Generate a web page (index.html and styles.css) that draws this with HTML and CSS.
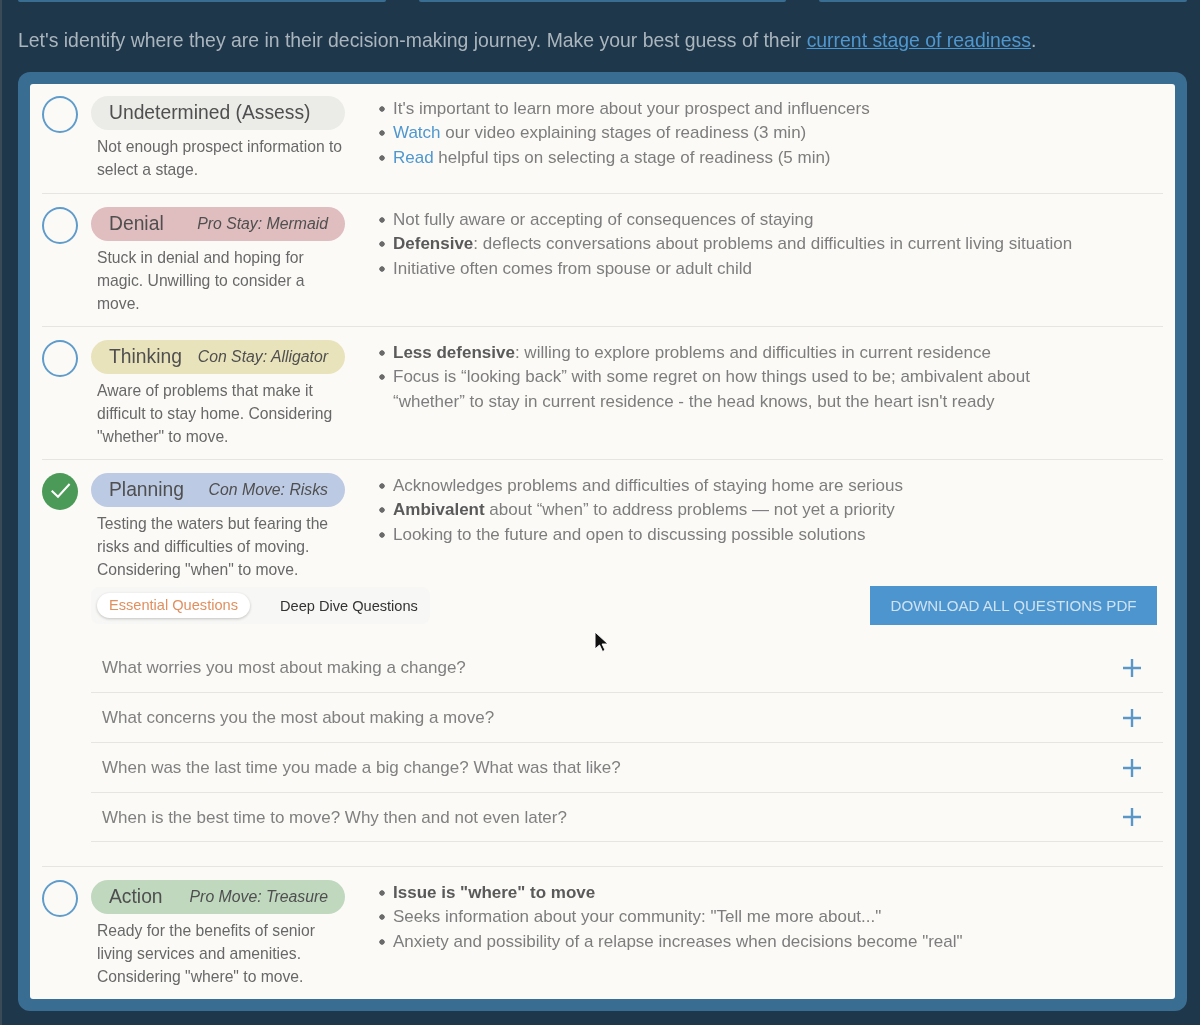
FILE: index.html
```html
<!DOCTYPE html>
<html lang="en">
<head>
<meta charset="utf-8">
<title>Stage of readiness</title>
<link rel="stylesheet" href="styles.css">
</head>
<body>
<div class="tabs-top"><span></span><span></span><span></span></div>
<p class="intro">Let's identify where they are in their decision-making journey. Make your best guess of their <a href="#">current stage of readiness</a>.</p>
<main class="panel">
  <div class="card">
    <section class="stage">
      <div class="stage-head">
        <span class="radio"></span>
        <div class="stage-info">
          <div class="pill pill-grey"><span class="pill-name">Undetermined (Assess)</span></div>
          <p class="desc">Not enough prospect information to select a stage.</p>
        </div>
      </div>
      <ul class="points">
        <li>It's important to learn more about your prospect and influencers</li>
        <li><a href="#">Watch</a> our video explaining stages of readiness (3 min)</li>
        <li><a href="#">Read</a> helpful tips on selecting a stage of readiness (5 min)</li>
      </ul>
    </section>
    <section class="stage">
      <div class="stage-head">
        <span class="radio"></span>
        <div class="stage-info">
          <div class="pill pill-red"><span class="pill-name">Denial</span><em>Pro Stay: Mermaid</em></div>
          <p class="desc">Stuck in denial and hoping for magic. Unwilling to consider a move.</p>
        </div>
      </div>
      <ul class="points">
        <li>Not fully aware or accepting of consequences of staying</li>
        <li><b>Defensive</b>: deflects conversations about problems and difficulties in current living situation</li>
        <li>Initiative often comes from spouse or adult child</li>
      </ul>
    </section>
    <section class="stage">
      <div class="stage-head">
        <span class="radio"></span>
        <div class="stage-info">
          <div class="pill pill-yellow"><span class="pill-name">Thinking</span><em>Con Stay: Alligator</em></div>
          <p class="desc">Aware of problems that make it difficult to stay home. Considering "whether" to move.</p>
        </div>
      </div>
      <ul class="points">
        <li><b>Less defensive</b>: willing to explore problems and difficulties in current residence</li>
        <li>Focus is “looking back” with some regret on how things used to be; ambivalent about “whether” to stay in current residence - the head knows, but the heart isn't ready</li>
      </ul>
    </section>
    <section class="stage stage-open">
      <div class="stage-top">
        <div class="stage-head">
          <span class="radio radio-on">
            <svg viewBox="0 0 36 37" width="36" height="37"><path d="M9.7 17.7l6.3 6L27.6 11" fill="none" stroke="#fff" stroke-width="2"/></svg>
          </span>
          <div class="stage-info">
            <div class="pill pill-blue"><span class="pill-name">Planning</span><em>Con Move: Risks</em></div>
            <p class="desc">Testing the waters but fearing the risks and difficulties of moving. Considering "when" to move.</p>
          </div>
        </div>
        <ul class="points">
          <li>Acknowledges problems and difficulties of staying home are serious</li>
          <li><b>Ambivalent</b> about “when” to address problems — not yet a priority</li>
          <li>Looking to the future and open to discussing possible solutions</li>
        </ul>
      </div>
      <div class="questions">
        <div class="toolbar">
          <div class="switch">
            <span class="switch-on">Essential Questions</span>
            <span class="switch-off">Deep Dive Questions</span>
          </div>
          <a class="download" href="#">DOWNLOAD ALL QUESTIONS PDF</a>
        </div>
        <div class="q"><span>What worries you most about making a change?</span><svg class="plus" viewBox="0 0 18 18" width="18" height="18"><path d="M9 0v18M0 9h18"/></svg></div>
        <div class="q"><span>What concerns you the most about making a move?</span><svg class="plus" viewBox="0 0 18 18" width="18" height="18"><path d="M9 0v18M0 9h18"/></svg></div>
        <div class="q"><span>When was the last time you made a big change? What was that like?</span><svg class="plus" viewBox="0 0 18 18" width="18" height="18"><path d="M9 0v18M0 9h18"/></svg></div>
        <div class="q"><span>When is the best time to move? Why then and not even later?</span><svg class="plus" viewBox="0 0 18 18" width="18" height="18"><path d="M9 0v18M0 9h18"/></svg></div>
      </div>
    </section>
    <section class="stage">
      <div class="stage-head">
        <span class="radio"></span>
        <div class="stage-info">
          <div class="pill pill-green"><span class="pill-name">Action</span><em>Pro Move: Treasure</em></div>
          <p class="desc">Ready for the benefits of senior living services and amenities. Considering "where" to move.</p>
        </div>
      </div>
      <ul class="points">
        <li><b>Issue is "where" to move</b></li>
        <li>Seeks information about your community: "Tell me more about..."</li>
        <li>Anxiety and possibility of a relapse increases when decisions become "real"</li>
      </ul>
    </section>
  </div>
</main>
<svg class="cursor" viewBox="0 0 16 24" width="16" height="24"><path d="M1 1v17l4.5-4 3 6.5 2.6-1.2-3-6.3H14z" fill="#111" stroke="#fff" stroke-width="1"/></svg>
</body>
</html>
```
FILE: styles.css
```css
* { box-sizing: border-box; }
html, body { margin: 0; height: 1025px; overflow: hidden; }
body {
  position: relative;
  background: #1f374a;
  font-family: "Liberation Sans", Arial, sans-serif;
  color: #666;
  padding: 0 13px 0 16px;
  border-left: 2px solid #3a4a57;
}
.tabs-top { display: flex; gap: 33px; height: 2px; }
.tabs-top span { flex: 1; background: #3a6d92; border-radius: 0 0 3px 3px; }
.intro {
  margin: 0;
  padding-top: 26px;
  font-size: 19.42px;
  line-height: 24px;
  color: #aab5bd;
  height: 70px;
  filter: blur(0.55px);
}
.intro a { color: #4f97cf; text-decoration: underline; }
.panel {
  background: #3a6d92;
  border-radius: 12px;
  padding: 12px;
  height: 939px;
  filter: blur(0.55px);
}
.card {
  background: #fbfaf7;
  border-radius: 3px;
  height: 915px;
  padding: 0 12px;
}
.stage {
  display: flex;
  padding: 12px 0 11px;
  border-bottom: 1px solid #e6e5e1;
}
.stage:first-child { padding-bottom: 12px; }
.stage + .stage { padding-top: 13px; }
.stage:last-child { border-bottom: 0; }
.stage-open { display: block; padding-bottom: 24px; }
.stage-top { display: flex; }
.stage-head { display: flex; gap: 13px; width: 303px; flex: none; }
.stage-info { width: 254px; }
.radio {
  flex: none;
  width: 36px;
  height: 37px;
  border: 2.3px solid #5f9ccb;
  border-radius: 50%;
}
.radio-on {
  border: 0;
  background: #4c9a58;
}
.radio-on svg { display: block; }
.pill {
  display: flex;
  justify-content: space-between;
  align-items: center;
  height: 34px;
  padding: 0 17px 0 18px;
  border-radius: 17px;
  color: #4f4f4f;
}
.pill-name { font-size: 19.3px; }
.pill em { font-size: 15.8px; }
.pill-grey { background: #ebebe8; }
.pill-red { background: #e0bdbf; }
.pill-yellow { background: #e9e3bb; }
.pill-blue { background: #bdcae3; }
.pill-green { background: #bfd8be; }
.desc {
  margin: 5px 0 0;
  padding-left: 6px;
  font-size: 15.7px;
  line-height: 23px;
  color: #686868;
}
.points {
  margin: 0;
  padding: 1px 0 0 34px;
  font-size: 17px;
  line-height: 24.3px;
  color: #7d7d7d;
  width: 745px;
  flex: none;
  list-style: none;
}
.points li {
  padding-left: 14px;
  background: radial-gradient(circle, #6a6a6a 2.4px, transparent 3px) no-repeat 0 9px / 6px 6px;
}
.points b { color: #5a5a5a; }
.points a { color: #4f97cf; text-decoration: none; }
.questions { margin: 5px 0 0 49px; }
.toolbar {
  display: flex;
  justify-content: space-between;
  align-items: flex-start;
  padding-right: 6px;
  margin-bottom: 18px;
}
.switch {
  display: flex;
  align-items: center;
  width: 339px;
  height: 37px;
  margin-top: 1px;
  padding-left: 6px;
  background: #f7f7f5;
  border-radius: 8px;
  font-size: 14.6px;
}
.switch-on {
  padding: 0 12px;
  height: 25px;
  line-height: 25px;
  background: #fff;
  border-radius: 13px;
  color: #e08f5f;
  box-shadow: 0 1px 3px rgba(0,0,0,.22);
}
.switch-off { margin-left: 30px; color: #333; }
.download {
  width: 287px;
  height: 39px;
  line-height: 39px;
  text-align: center;
  background: #4d95cf;
  color: #cfe2f1;
  font-size: 15.1px;
  text-decoration: none;
}
.q {
  display: flex;
  justify-content: space-between;
  align-items: center;
  height: 50px;
  padding: 0 22px 0 11px;
  border-bottom: 1px solid #e6e5e1;
  font-size: 17px;
  color: #808080;
}
.q:last-child { height: 49px; }
.q span { padding-top: 1px; }
.plus { stroke: #5b96c8; stroke-width: 2.4; fill: none; }
.cursor { position: absolute; left: 592px; top: 631px; }
```
